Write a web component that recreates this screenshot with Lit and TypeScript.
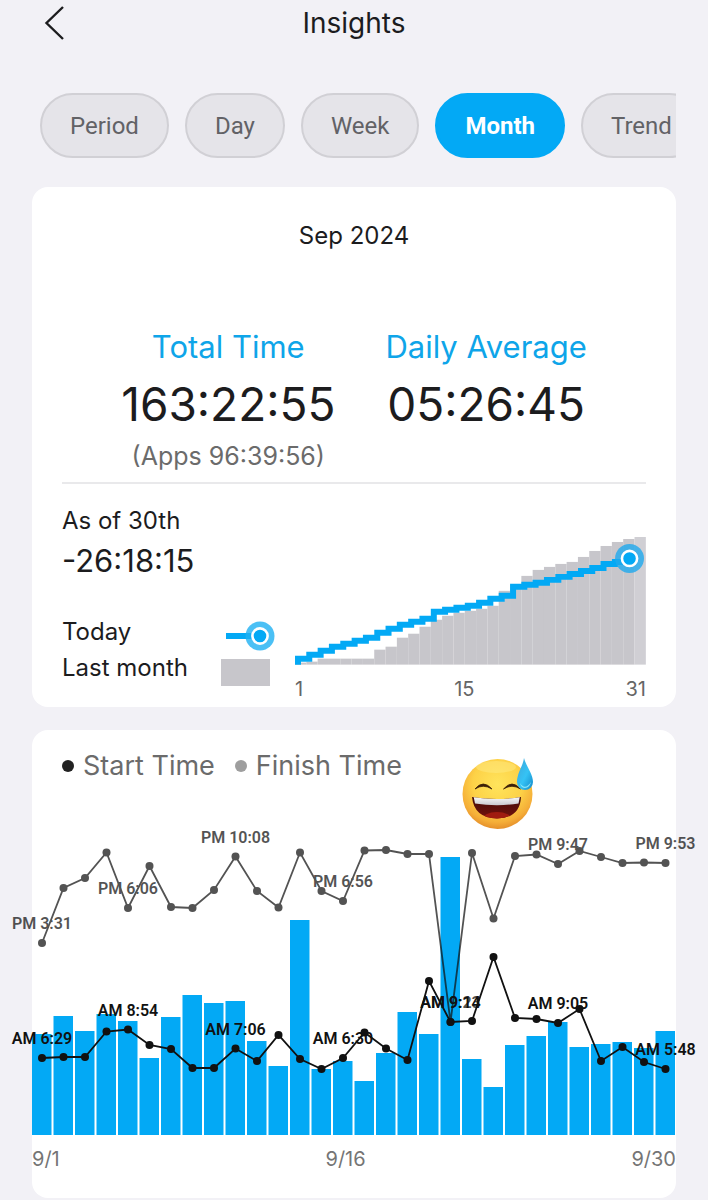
import { LitElement, html, svg, css } from "lit";
import { customElement, state } from "lit/decorators.js";
import { classMap } from "lit/directives/class-map.js";

const TABS = ["Period", "Day", "Week", "Month", "Trend"];

/* ---------- Cumulative chart: usage so far against last month ---------- */

const STEP_W = 11.35;
const LAST_MONTH = [
  2, 3, 6, 6, 6, 6, 6, 15, 18, 27, 31, 38, 45, 49, 52, 54, 56, 59, 74, 80, 89, 95, 98, 101, 103,
  108, 114, 119, 123, 126, 128,
];
const THIS_MONTH = [
  6, 10, 14, 18, 21, 24, 27, 32, 36, 40, 43, 46, 53, 55, 57, 59, 62, 66, 69, 78, 80, 82, 85, 88,
  91, 94, 97, 101, 103, 106,
];

@customElement("cumulative-chart")
class CumulativeChart extends LitElement {
  static styles = css`
    :host {
      display: block;
    }
    .plot {
      display: block;
      width: 100%;
      overflow: visible;
    }
    .bar {
      fill: #c7c6cb;
    }
    .bar.rest {
      fill: #d0cfd4;
    }
    .line {
      fill: none;
      stroke: #03a9f5;
      stroke-width: 6;
    }
    .halo {
      fill: #1ea9ee;
      opacity: 0.8;
    }
    .ring {
      fill: #03a9f5;
      stroke: #fff;
      stroke-width: 2.6;
    }
    .axis {
      display: flex;
      justify-content: space-between;
      margin-top: 12px;
      font-size: 20px;
      line-height: 24px;
      color: #666;
    }
  `;

  render() {
    const h = 128;
    let d = `M3 ${h}`;
    THIS_MONTH.forEach((v, i) => {
      d += ` V${h - v} H${(3 + STEP_W * (i + 1)).toFixed(1)}`;
    });
    return html`
      <svg class="plot" viewBox="0 0 352 128" role="img" aria-label="Total time by day">
        ${LAST_MONTH.map(
          (v, i) => svg`<rect class=${i === 30 ? "bar rest" : "bar"} x=${(i * STEP_W).toFixed(2)}
            y=${h - v} width=${STEP_W} height=${v}></rect>`,
        )}
        <path class="line" d=${d.replace(/ H[\d.]+$/, " H336")}></path>
        <circle class="halo" cx="335.5" cy="21.5" r="14.5"></circle>
        <circle class="ring" cx="335.5" cy="21.5" r="7.6"></circle>
      </svg>
      <div class="axis"><span>1</span><span>15</span><span>31</span></div>
    `;
  }
}

/* ---------- Daily chart: bars with start and finish times ---------- */

const DAY_W = 21.5;
const BASE = 299;
const HOURS = [
  101, 119, 104, 121, 114, 77, 118, 140, 132, 134, 94, 69, 215, 66, 74, 54, 82, 123, 101, 278, 76,
  48, 90, 99, 113, 88, 91, 93, 87, 104,
];
const START = [
  222, 221, 221, 195.5, 193.5, 209, 213, 232, 232, 212.5, 225, 199, 223, 233, 222, 196.5, 212.5,
  224, 145, 186, 185, 121, 182, 183, 187, 173, 225, 211, 226, 233,
];
const FINISH = [
  107, 52, 42, 16.5, 72, 30, 71, 72, 54, 20.5, 55, 71.5, 16.5, 55, 65, 14.5, 14, 18, 18, 186, 17,
  82.5, 20, 18.5, 28, 15, 21, 27, 26.5, 27,
];
const START_LABELS: [number, string][] = [
  [0, "AM 6:29"],
  [4, "AM 8:54"],
  [9, "AM 7:06"],
  [14, "AM 6:30"],
  [19, "AM 9:14"],
  [24, "AM 9:05"],
  [29, "AM 5:48"],
];
const FINISH_LABELS: [number, string][] = [
  [0, "PM 3:31"],
  [4, "PM 6:06"],
  [9, "PM 10:08"],
  [14, "PM 6:56"],
  [19, "AM 9:23"],
  [24, "PM 9:47"],
  [29, "PM 9:53"],
];

@customElement("daily-chart")
class DailyChart extends LitElement {
  static styles = css`
    :host {
      display: block;
    }
    .plot {
      display: block;
      width: 100%;
      overflow: visible;
    }
    .bar {
      fill: #03a9f5;
    }
    .series {
      color: #111;
    }
    .series.finish {
      opacity: 0.72;
    }
    .line {
      fill: none;
      stroke: currentColor;
      stroke-width: 1.8;
    }
    .dot {
      fill: currentColor;
    }
    .label {
      fill: currentColor;
      font: 600 16px Roboto, sans-serif;
      text-anchor: middle;
    }
    .axis {
      display: flex;
      justify-content: space-between;
      margin-top: 12px;
      font-size: 20px;
      line-height: 24px;
      color: #757575;
    }
  `;

  private x(i: number) {
    return 10 + i * DAY_W;
  }

  private series(kind: string, values: number[], labels: [number, string][]) {
    return svg`<g class="series ${kind}">
      ${labels.map(
        ([i, t]) => svg`<text class="label" x=${this.x(i)} y=${values[i] - 14}>${t}</text>`,
      )}
      <polyline class="line" points=${values.map((v, i) => `${this.x(i)},${v}`).join(" ")}></polyline>
      ${values.map((v, i) => svg`<circle class="dot" cx=${this.x(i)} cy=${v} r="4"></circle>`)}
    </g>`;
  }

  render() {
    return html`
      <svg class="plot" viewBox="0 0 644 299" role="img" aria-label="Start and finish time by day">
        ${HOURS.map(
          (v, i) => svg`<rect class="bar" x=${i * DAY_W} y=${BASE - v} width="19.5" height=${v}></rect>`,
        )}
        ${this.series("finish", FINISH, FINISH_LABELS)} ${this.series("start", START, START_LABELS)}
      </svg>
      <div class="axis"><span>9/1</span><span>9/16</span><span>9/30</span></div>
    `;
  }
}

/* ---------- Mood sticker ---------- */

@customElement("sweat-smile")
class SweatSmile extends LitElement {
  static styles = css`
    :host {
      display: block;
      width: 72px;
      height: 72px;
    }
    .face {
      display: block;
      width: 100%;
      height: 100%;
    }
  `;

  render() {
    return html`
      <svg class="face" viewBox="0 0 72 72" role="img" aria-label="Grinning face with sweat">
        <defs>
          <radialGradient id="skin" cx="0.5" cy="0.36" r="0.64">
            <stop offset="0" stop-color="#ffe45c"></stop>
            <stop offset="0.55" stop-color="#fdd247"></stop>
            <stop offset="0.85" stop-color="#f5ae38"></stop>
            <stop offset="1" stop-color="#e58f2a"></stop>
          </radialGradient>
          <linearGradient id="mouth" x1="0" y1="0" x2="0" y2="1">
            <stop offset="0" stop-color="#3c0b08"></stop>
            <stop offset="1" stop-color="#7a130d"></stop>
          </linearGradient>
          <linearGradient id="teeth" x1="0" y1="0" x2="0" y2="1">
            <stop offset="0" stop-color="#ffffff"></stop>
            <stop offset="1" stop-color="#c9c9cf"></stop>
          </linearGradient>
          <linearGradient id="drop" x1="0" y1="0" x2="1" y2="1">
            <stop offset="0" stop-color="#3fa4d8"></stop>
            <stop offset="0.55" stop-color="#35c3f5"></stop>
            <stop offset="1" stop-color="#1288c8"></stop>
          </linearGradient>
          <clipPath id="lips">
            <path d="M10 39 Q35 43 59 39 Q58 60 35 60.5 Q12 60 10 39 Z"></path>
          </clipPath>
        </defs>
        <circle cx="35.5" cy="36" r="35" fill="url(#skin)"></circle>
        <ellipse cx="34" cy="9" rx="20" ry="6" fill="#fff39a" opacity="0.35"></ellipse>
        <g clip-path="url(#lips)">
          <rect x="8" y="36" width="54" height="27" fill="url(#mouth)"></rect>
          <ellipse cx="35" cy="62" rx="15" ry="8" fill="#a01c10"></ellipse>
          <path d="M11.5 38 Q35 43 58 38 L56.5 45.5 Q35 49 13 45.5 Z" fill="url(#teeth)"></path>
        </g>
        <path
          d="M13 31 Q21 21 30 31 Q21 25.500 13 31 Z M41.500 31 Q50 21 58.500 31 Q50 25.500 41.500 31 Z"
          fill="#3c2007"
          stroke="#3c2007"
          stroke-width="0.8"
          stroke-linejoin="round"
        ></path>
        <path d="M62 0 C64 8 71 16 71 24 A8 8 0 0 1 55 24 C55 15 61 8 62 0 Z" fill="url(#drop)"></path>
        <path d="M58 25 Q63 33 69 24 Q68 29.500 63 30 Q59 30 58 25 Z" fill="#9ff0fb" opacity="0.8"></path>
      </svg>
    `;
  }
}

/* ---------- Page ---------- */

@customElement("app-root")
class AppRoot extends LitElement {
  static styles = css`
    :host {
      display: block;
      box-sizing: border-box;
      min-height: 100vh;
      padding: 0 32px;
      background: #f2f1f6;
      color: #1c1c1e;
      font-family: Inter, sans-serif;
      overflow: hidden;
    }
    * {
      box-sizing: border-box;
    }
    h1,
    h2,
    p,
    dl,
    dt,
    dd {
      margin: 0;
      font-weight: 400;
    }
    .bar {
      display: grid;
      grid-template-columns: 44px 1fr 44px;
      align-items: center;
      height: 45px;
    }
    .back {
      width: 44px;
      height: 44px;
      padding: 0;
      border: 0;
      background: none;
      color: inherit;
    }
    .back-icon {
      display: block;
      width: 44px;
      height: 44px;
    }
    .title {
      font-size: 28px;
      line-height: 32px;
      text-align: center;
    }
    .tabs {
      display: flex;
      gap: 16px;
      margin-top: 48px;
      padding-left: 8px;
      overflow: hidden;
    }
    .tab {
      flex: none;
      height: 65px;
      padding: 0 28px;
      border: 2px solid #d1d0d5;
      border-radius: 33px;
      background: #e5e4e9;
      color: #626266;
      font: 400 24px Roboto, sans-serif;
    }
    .tab.on {
      border-color: #03a9f5;
      background: #03a9f5;
      color: #fff;
      font-weight: 700;
    }
    .card {
      border-radius: 16px;
      background: #fff;
    }
    .summary {
      margin-top: 29px;
      padding: 33px 30px 6px;
    }
    .month {
      font-size: 24px;
      line-height: 32px;
      text-align: center;
    }
    .totals {
      display: flex;
      justify-content: center;
      gap: 50px;
      margin-top: 75px;
      padding-bottom: 10px;
      border-bottom: 2px solid #e9e9eb;
      text-align: center;
    }
    .name {
      color: #0ea5e9;
      font-size: 31px;
      line-height: 40px;
    }
    .value {
      margin-top: 5px;
      font-size: 46px;
      line-height: 64px;
    }
    .note {
      margin-top: 4px;
      color: #6b6b6b;
      font-size: 25px;
      line-height: 32px;
    }
    .compare {
      display: grid;
      grid-template-columns: 213px 1fr;
      gap: 20px;
      margin-top: 21px;
    }
    .asof {
      font-size: 24px;
      line-height: 32px;
    }
    .diff {
      margin-top: 4px;
      font-size: 31px;
      line-height: 40px;
    }
    .keys {
      display: grid;
      grid-template-columns: 1fr 54px;
      grid-auto-rows: 36px;
      margin-top: 37px;
      font-size: 24px;
      line-height: 28px;
    }
    .key-art {
      display: block;
      width: 54px;
      height: 36px;
    }
    .cumulative {
      padding-top: 32px;
    }
    .times {
      margin-top: 23px;
      padding-bottom: 27px;
    }
    .times-head {
      display: flex;
      align-items: flex-start;
      gap: 20px;
      padding: 20px 30px 0;
      height: 106px;
      color: #6b6b6b;
      font-size: 27px;
      line-height: 32px;
    }
    .series-key {
      display: flex;
      align-items: center;
      gap: 9px;
    }
    .series-key::before {
      content: "";
      width: 12px;
      height: 12px;
      border-radius: 50%;
      background: #222;
    }
    .series-key.finish::before {
      background: #9e9e9e;
    }
    .sticker {
      margin: 8px 0 0 40px;
    }
  `;

  @state() private active = "Month";

  render() {
    return html`
      <header class="bar">
        <button class="back" aria-label="Back">
          <svg class="back-icon" viewBox="0 0 44 44" fill="none" stroke="currentColor" stroke-width="2.4">
            <path d="M31 6 L14.500 22 L31 38"></path>
          </svg>
        </button>
        <h1 class="title">Insights</h1>
      </header>

      <nav class="tabs">
        ${TABS.map(
          (t) => html`<button
            class=${classMap({ tab: true, on: t === this.active })}
            aria-pressed=${t === this.active}
            @click=${() => (this.active = t)}
          >
            ${t}
          </button>`,
        )}
      </nav>

      <section class="card summary">
        <h2 class="month">Sep 2024</h2>
        <dl class="totals">
          <div>
            <dt class="name">Total Time</dt>
            <dd class="value">163:22:55</dd>
            <dd class="note">(Apps 96:39:56)</dd>
          </div>
          <div>
            <dt class="name">Daily Average</dt>
            <dd class="value">05:26:45</dd>
          </div>
        </dl>
        <div class="compare">
          <div>
            <p class="asof">As of 30th</p>
            <p class="diff">-26:18:15</p>
            <div class="keys">
              <span>Today</span>
              <svg class="key-art" viewBox="0 0 54 36">
                <path d="M5 18 H34" stroke="#03a9f5" stroke-width="6"></path>
                <circle cx="39" cy="18" r="14.500" fill="#1eb0f2" opacity="0.8"></circle>
                <circle cx="39" cy="18" r="7.600" fill="#03a9f5" stroke="#fff" stroke-width="2.600"></circle>
              </svg>
              <span>Last month</span>
              <svg class="key-art" viewBox="0 0 54 36">
                <rect x="0" y="5" width="49" height="27" fill="#c7c6cb"></rect>
              </svg>
            </div>
          </div>
          <cumulative-chart class="cumulative"></cumulative-chart>
        </div>
      </section>

      <section class="card times">
        <div class="times-head">
          <span class="series-key">Start Time</span>
          <span class="series-key finish">Finish Time</span>
          <sweat-smile class="sticker"></sweat-smile>
        </div>
        <daily-chart></daily-chart>
      </section>
    `;
  }
}
